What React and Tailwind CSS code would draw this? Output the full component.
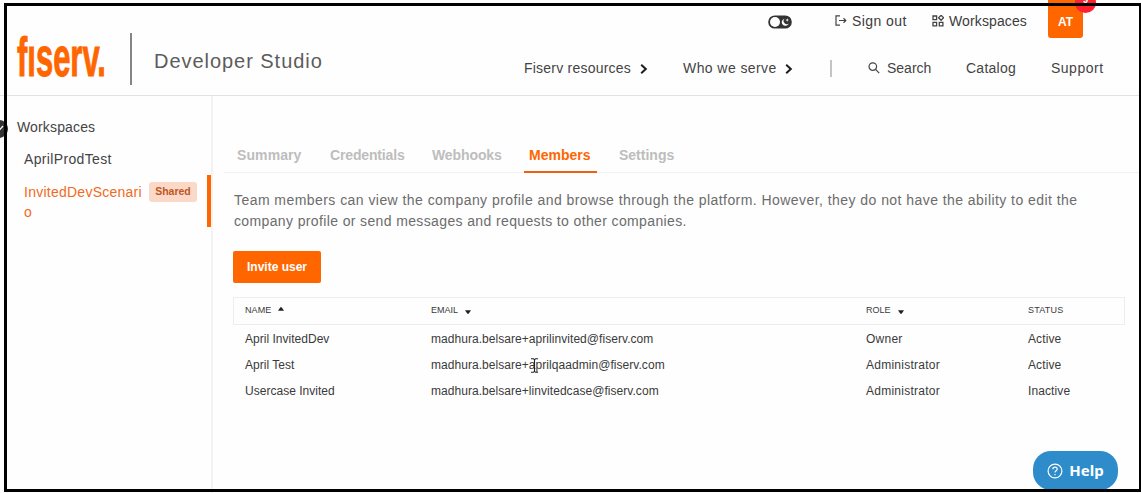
import React from "react";

const members = [
  ["April InvitedDev", "madhura.belsare+aprilinvited@fiserv.com", "Owner", "Active"],
  ["April Test", "madhura.belsare+aprilqaadmin@fiserv.com", "Administrator", "Active"],
  ["Usercase Invited", "madhura.belsare+linvitedcase@fiserv.com", "Administrator", "Inactive"],
];

function Chevron() {
  return (
    <svg className="mt-[2px] h-[10px] w-[8px] shrink-0" viewBox="0 0 8 10" fill="none" stroke="#1c1c1c" strokeWidth="2">
      <path d="M1.2 .8 5.8 5 1.2 9.2" />
    </svg>
  );
}

function Caret({ up }) {
  return (
    <svg className={up ? "mb-[4px] h-[4px] w-[6px]" : "mt-[2px] h-[4px] w-[6px]"} viewBox="0 0 6 4" fill="#222">
      <path d={up ? "M0 3.8 2.4 .2H3.6L6 3.8Z" : "M0 .2 2.4 3.8H3.6L6 .2Z"} />
    </svg>
  );
}

function Header() {
  return (
    <header className="flex h-[96px] shrink-0 border-b border-[#e3e3e3]">
      <div className="flex w-[508px] shrink-0 pl-[17px]">
        <div className="mt-[29px] h-[62px] w-[113px] shrink-0">
          <span className="block w-max origin-left scale-x-[0.553] text-[56px] leading-[56px] font-bold text-[#ff6600] [-webkit-text-stroke:1px_#ff6600]">
            fıserv.
          </span>
        </div>
        <div className="mt-[33px] h-[52px] w-[2px] bg-[#858585]" />
        <div className="mt-[49px] ml-[22px] text-[20px] leading-[24px] tracking-[0.96px] whitespace-nowrap text-[#5c5c5c]">
          Developer Studio
        </div>
      </div>
      <div className="flex flex-1 flex-col">
        <div className="flex h-[41px] items-center pl-[260px]">
          <svg className="mt-[2px] h-[14px] w-[24px] shrink-0" viewBox="0 0 24 14">
            <rect x=".2" y=".4" width="23.6" height="13.2" rx="6.6" fill="#333" />
            <circle cx="7" cy="7" r="5" fill="#fff" />
            <path d="M16.7 3.7a3.6 3.6 0 1 0 4.1 4.7 3.1 3.1 0 0 1-4.1-4.7Z" fill="#fff" />
            <path d="m19.2 3.2.5 1.3 1.3.5-1.3.5-.5 1.3-.5-1.3-1.3-.5 1.3-.5Z" fill="#fff" />
          </svg>
          <svg className="ml-[43px] h-[11px] w-[12px] shrink-0" viewBox="0 0 12 11" fill="none" stroke="#444" strokeWidth="1.2">
            <path d="M5 .8H1v9.4h4M4 5.5h6.6M8.5 3.3l2.3 2.2-2.3 2.2" />
          </svg>
          <span className="ml-[5px] w-[80px] shrink-0 text-[14px] leading-5 tracking-[0.42px] whitespace-nowrap text-[#3c3c3c]">Sign out</span>
          <svg className="h-[12px] w-[12px] shrink-0" viewBox="0 0 12 12" fill="none" stroke="#444" strokeWidth="1.3">
            <path d="M1 1h3.6v3.6H1zM1 7.3h3.6v3.6H1zM7.3 7.3h3.6v3.6H7.3zM9.1.3l2.5 2.5-2.5 2.5-2.5-2.5z" />
          </svg>
          <span className="ml-[5px] w-[99px] shrink-0 text-[14px] leading-5 tracking-[0.12px] whitespace-nowrap text-[#3c3c3c]">Workspaces</span>
          <div className="relative -mt-[6px] h-[41px] w-[35px] shrink-0 rounded-[3px] bg-[#ff6600] pt-[15px] text-center text-[12px] leading-5 font-bold text-white">
            AT
            <span className="absolute -top-[5px] left-[27px] h-[21px] w-[21px] rounded-full bg-[#ff1f2d] text-[10px] leading-[15px] font-bold text-white">9</span>
          </div>
        </div>
        <div className="flex h-[54px] items-center pl-[16px] text-[14px] leading-5 whitespace-nowrap text-[#444]">
          <span className="w-[116px] shrink-0 tracking-[0.22px]">Fiserv resources</span>
          <Chevron />
          <span className="ml-[35px] w-[102px] shrink-0 tracking-[0.42px]">Who we serve</span>
          <Chevron />
          <div className="ml-[37px] h-[17px] w-[2px] shrink-0 bg-[#c4c4c4]" />
          <svg className="ml-[36px] h-[12px] w-[12px] shrink-0" viewBox="0 0 12 12" fill="none" stroke="#444" strokeWidth="1.2">
            <circle cx="4.8" cy="4.6" r="3.8" />
            <path d="m7.6 7.4 3.6 3.8" />
          </svg>
          <span className="ml-[7px] w-[79px] shrink-0">Search</span>
          <span className="w-[85px] shrink-0 tracking-[0.25px]">Catalog</span>
          <span className="tracking-[0.5px]">Support</span>
        </div>
      </div>
    </header>
  );
}

function Sidebar() {
  return (
    <aside className="flex w-[213px] shrink-0 flex-col border-r-2 border-[#f3f3f3] text-[14px] text-[#444]">
      <div className="mt-[21px] flex h-[20px] items-center">
        <div className="-ml-[11px] mt-[3px] flex h-[18px] w-[19px] items-center justify-end rounded-full bg-[#333] pr-[4px]">
          <svg className="h-[7px] w-[8px]" viewBox="0 0 8 7" fill="none" stroke="#fff" strokeWidth="1.3">
            <path d="m1 3.5 2 2L7 1" />
          </svg>
        </div>
        <span className="ml-[9px] tracking-[0.15px]">Workspaces</span>
      </div>
      <div className="mt-[12px] ml-[24px] h-[20px] leading-5 tracking-[0.35px]">AprilProdTest</div>
      <div className="mt-[6px] flex h-[52px] justify-between">
        <div className="flex pt-[7px] pl-[24px]">
          <span className="w-[125px] leading-[20px] tracking-[0.25px] text-[#f26a1b]">
            InvitedDevScenari
            <br />o
          </span>
          <span className="flex h-[20px] w-[48px] items-center justify-center rounded-[3px] bg-[#fbd9c8] text-[10.5px] font-bold text-[#bf5620]">
            Shared
          </span>
        </div>
        <div className="w-[4px] bg-[#ff6600]" />
      </div>
    </aside>
  );
}

function MemberTable() {
  return (
    <section className="mt-[14px] ml-[20px] w-[892px]">
      <div className="flex h-[28px] items-center border border-[#ededed] pl-[11px] text-[9px] text-[#3a3a3a]">
        <div className="flex w-[186px] items-center gap-[7px] tracking-[0.1px]">NAME <Caret up /></div>
        <div className="flex w-[435px] items-center gap-[7px]">EMAIL <Caret /></div>
        <div className="flex w-[162px] items-center gap-[7px]">ROLE <Caret /></div>
        <div className="tracking-[0.2px]">STATUS</div>
      </div>
      {members.map(([name, email, role, status]) => (
        <div key={name} className="flex h-[26px] items-center pt-[2px] pl-[12px] text-[12px] whitespace-nowrap text-[#3a3a3a]">
          <span className="w-[186px] shrink-0 tracking-[0.02px]">{name}</span>
          <span className="w-[435px] shrink-0 tracking-[0.05px]">{email}</span>
          <span className="w-[162px] shrink-0 tracking-[0.25px]">{role}</span>
          <span className="tracking-[0.1px]">{status}</span>
        </div>
      ))}
    </section>
  );
}

function Main() {
  return (
    <main className="flex flex-1 flex-col">
      <nav className="mt-[42px] ml-[11px] flex h-[35px] border-b border-[#f1f1f1] pl-[13px] text-[14px] leading-[34px] font-bold whitespace-nowrap text-[#bdbdbd]">
        <span className="w-[93px] tracking-[0.1px]">Summary</span>
        <span className="w-[102px] tracking-[-0.15px]">Credentials</span>
        <span className="w-[92px] tracking-[-0.1px]">Webhooks</span>
        <span className="h-[35px] w-[73px] border-b-2 border-[#ee5f12] pl-[5px] text-[#ff6600]">Members</span>
        <span className="ml-[22px]">Settings</span>
      </nav>
      <p className="mt-[17px] ml-[21px] text-[14px] leading-[21px] whitespace-nowrap text-[#6c6c6c]">
        <span className="tracking-[0.445px]">
          Team members can view the company profile and browse through the platform. However, they do not have the ability to edit the
        </span>
        <br />
        <span className="tracking-[0.37px]">company profile or send messages and requests to other companies.</span>
      </p>
      <button className="mt-[19px] ml-[20px] h-[32px] w-[88px] rounded-[2px] bg-[#ff6600] text-[12px] font-bold text-white">
        Invite user
      </button>
      <MemberTable />
    </main>
  );
}

export default function App() {
  return (
    <div className="relative flex h-[493px] w-[1141px] flex-col overflow-hidden bg-[#fefefe] font-['Liberation_Sans',Arial,sans-serif]">
      <Header />
      <div className="flex flex-1">
        <Sidebar />
        <Main />
      </div>
      <svg className="absolute top-[358px] left-[530px] h-[15px] w-[9px]" viewBox="0 0 9 15" fill="none" stroke="#222" strokeWidth="1.1">
        <path d="M1 .8h2.4l1.1.8 1.1-.8H8M4.5 1.5v12M1 14.2h2.4l1.1-.8 1.1.8H8" />
      </svg>
      <button className="absolute top-[451px] left-[1033px] flex h-[39px] w-[85px] items-center justify-center gap-[6px] rounded-[18px] bg-[#2f8ccb] font-['Noto_Sans',sans-serif] text-[15px] font-bold text-white">
        <svg className="h-[16px] w-[16px]" viewBox="0 0 16 16" fill="none" stroke="#fff" strokeWidth="1.2">
          <circle cx="8" cy="8" r="6.9" />
          <path d="M5.8 6.3C5.8 3.2 10.2 3.4 10.2 6.1 10.2 7.8 8 7.7 8 9.6M8 11v1.2" />
        </svg>
        Help
      </button>
      <div className="pointer-events-none absolute top-[3px] left-[4px] h-[489px] w-[1137px] border-t-[3px] border-r-2 border-b-[3px] border-l-[3px] border-black" />
    </div>
  );
}
